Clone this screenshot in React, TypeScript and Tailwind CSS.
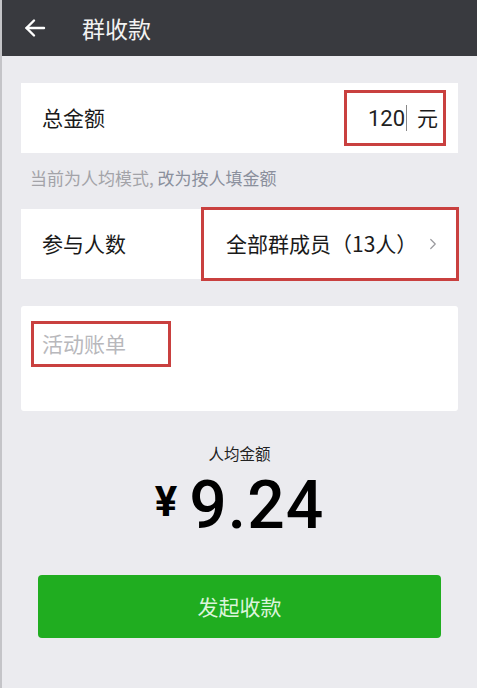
import { ChevronRight } from 'lucide-react';

const cjk = { fontFamily: '"Noto Sans CJK SC", "Noto Sans", sans-serif' };

export default function App() {
  return (
    <div className="w-[477px] h-[688px] bg-[#ebebef] border-l-2 border-[#c4c4c8] text-[#1a1a1a] overflow-hidden" style={cjk}>
      {/* Header */}
      <div className="h-[56px] bg-[#393a3f] flex items-center">
        <svg className="ml-[21px] w-[24px] h-[24px]" viewBox="0 0 24 24" fill="none" stroke="#ffffff" strokeWidth="2.4" strokeLinecap="round" strokeLinejoin="round">
          <path d="M21 12H3.5" />
          <path d="M11 4.5L3.5 12l7.5 7.5" />
        </svg>
        <span className="ml-[35px] text-[23px] text-[#f2f2f2] leading-none">群收款</span>
      </div>

      {/* Total amount */}
      <div className="mt-[27px] mx-[19px] h-[70px] bg-white flex items-center justify-between pl-[21px] pr-[12px]">
        <span className="text-[21px]">总金额</span>
        <div className="w-[102px] h-[56px] border-[3px] border-[#c9403f] flex items-center justify-end pr-[5px]">
          <span className="text-[22px] text-[#222]" style={{ fontFamily: '"Roboto", "Noto Sans CJK SC", sans-serif' }}>120</span>
          <span className="w-px h-[26px] bg-[#888] ml-[1px]" />
          <span className="ml-[10px] text-[21px]">元</span>
        </div>
      </div>

      <p className="mt-[12px] ml-[28px] text-[17px] text-[#a3a3a8]">
        当前为人均模式, <span className="text-[#8a8f9c]">改为按人填金额</span>
      </p>

      {/* Participants */}
      <div className="mt-[18px] mx-[19px] h-[70px] bg-white flex items-center justify-between pl-[21px]">
        <span className="text-[21px]">参与人数</span>
        <div className="w-[258px] h-[74px] -mr-[1px] border-[3px] border-[#c9403f] flex items-center pl-[22px] pr-[14px]">
          <span className="text-[21px] flex-1">全部群成员（13人）</span>
          <ChevronRight className="w-[18px] h-[18px] text-[#9a9a9e]" strokeWidth={1.6} />
        </div>
      </div>

      {/* Note */}
      <div className="mt-[27px] mx-[19px] h-[105px] bg-white rounded-[3px] pt-[15px] pl-[10px]">
        <div className="w-[140px] h-[46px] border-[3px] border-[#c9403f] flex items-center pl-[8px]">
          <span className="text-[21px] text-[#b8b8bc]">活动账单</span>
        </div>
      </div>

      {/* Per person */}
      <div className="mt-[31px] flex flex-col items-center">
        <span className="text-[15.5px] text-[#222]">人均金额</span>
        <div className="mt-[8px] flex items-baseline text-black" style={{ fontFamily: '"Roboto", "Noto Sans", sans-serif' }}>
          <span className="text-[42px] font-bold leading-none mr-[12px] -translate-y-[12px]">¥</span>
          <span className="text-[66px] font-medium leading-none tracking-[1px]">9.24</span>
        </div>
      </div>

      {/* Button */}
      <div className="mt-[36px] mx-[36px] h-[63px] bg-[#20ad20] rounded-[4px] flex items-center justify-center">
        <span className="text-[21px] text-[#dcf5dc]">发起收款</span>
      </div>
    </div>
  );
}
